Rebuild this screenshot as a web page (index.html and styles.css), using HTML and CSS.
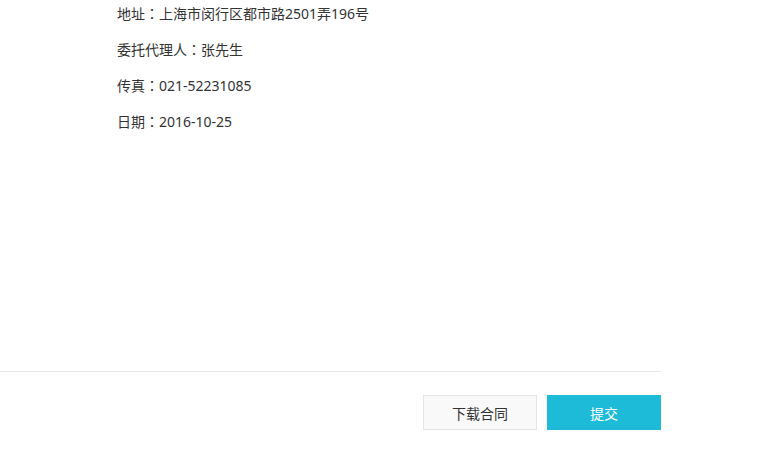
FILE: index.html
```html
<!DOCTYPE html>
<html lang="zh-CN">
<head>
    <meta charset="UTF-8">
    <meta name="viewport" content="width=device-width, initial-scale=1.0">
    <title>合同确认</title>
    <link rel="stylesheet" href="styles.css">
</head>
<body>
    <div class="page">
        <div class="info">
            <p class="info-row">地址<span class="sep" lang="zh-TW">：</span>上海市闵行区都市路2501弄196号</p>
            <p class="info-row">委托代理人<span class="sep" lang="zh-TW">：</span>张先生</p>
            <p class="info-row">传真<span class="sep" lang="zh-TW">：</span>021-52231085</p>
            <p class="info-row">日期<span class="sep" lang="zh-TW">：</span>2016-10-25</p>
        </div>
        <div class="footer">
            <button class="btn btn-default">下载合同</button>
            <button class="btn btn-primary">提交</button>
        </div>
    </div>
</body>
</html>
```

FILE: styles.css
```css
* {
    margin: 0;
    padding: 0;
    box-sizing: border-box;
}

body {
    background-color: #ffffff;
    color: #333333;
    font-family: "Noto Sans", "Noto Sans CJK SC", sans-serif;
    font-size: 14px;
}

.page {
    width: 661px;
}

.info {
    height: 371px;
    padding: 3px 0 0 117px;
}

.info-row {
    height: 20px;
    line-height: 20px;
    margin-bottom: 16px;
}

/* 全角冒号居中显示 */
.sep {
    font-family: "Noto Sans CJK TC", sans-serif;
}

.footer {
    border-top: 1px solid #e8e8e8;
    padding-top: 23px;
    display: flex;
    justify-content: flex-end;
    gap: 10px;
}

.btn {
    width: 114px;
    height: 35px;
    font-family: "Noto Sans CJK SC", sans-serif;
    font-size: 14px;
    cursor: pointer;
    border: 1px solid transparent;
}

.btn-default {
    background-color: #f9f9f9;
    border-color: #e5e5e5;
    color: #333333;
}

.btn-primary {
    background-color: #1dbbd8;
    border-color: #1dbbd8;
    color: #ffffff;
}
```
